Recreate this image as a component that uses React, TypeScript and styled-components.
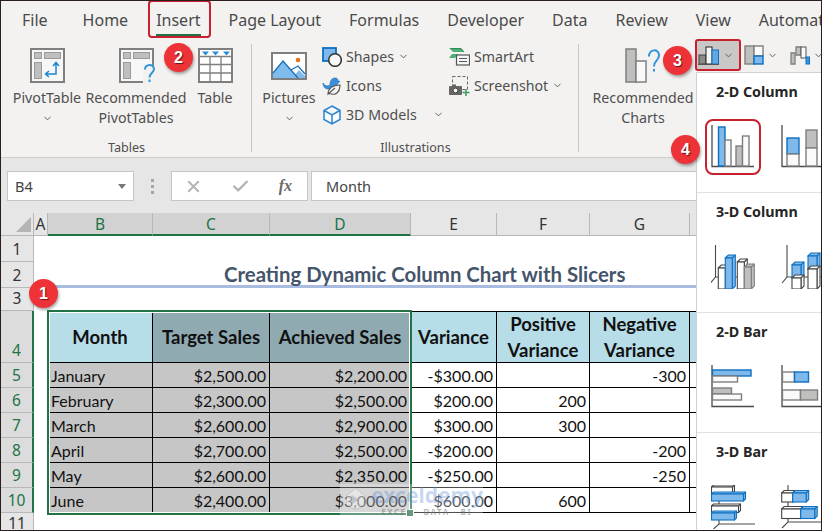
import React from "react";
import styled, { createGlobalStyle } from "styled-components";
import { ChevronDown, X, Check } from "lucide-react";

const UI = `"Noto Sans", "Open Sans", sans-serif`;
const CELL = `Lato, "Noto Sans", sans-serif`;
const RED = "#c8202f";
const GREEN = "#217346";

const Global = createGlobalStyle`
  html, body { margin: 0; padding: 0; overflow: hidden; background: #fff; }
  * { box-sizing: border-box; }
`;

const Frame = styled.div`
  position: relative;
  width: 822px;
  height: 531px;
  border: 1px solid #2a1f1c;
  background: #fff;
  overflow: hidden;
  display: flex;
  flex-direction: column;
  font-family: ${UI};
  color: #444;
`;

const TabBar = styled.nav`
  height: 36px;
  flex: none;
  display: flex;
  align-items: center;
  gap: 28px;
  padding: 2px 0 0 21px;
  background: #f3f2f1;
  font-size: 16px;
  color: #4a4a4a;
  white-space: nowrap;
`;

const Tab = styled.span<{ $active?: boolean }>`
  position: relative;
  &:first-child { margin-right: 7px; }
  ${(p) =>
    p.$active &&
    `
    &::before { content: ""; position: absolute; inset: -9px -10px -7px -8px; border: 2px solid ${RED}; border-radius: 4px; }
    &::after { content: ""; position: absolute; left: 0; right: 0; bottom: -5px; height: 2px; background: ${GREEN}; }
  `}
`;

const Ribbon = styled.section`
  height: 121px;
  flex: none;
  display: flex;
  background: #f3f2f1;
  border-bottom: 1px solid #cfcdcb;
`;

const Group = styled.div<{ $w: number; $pad?: number; $sep?: boolean }>`
  position: relative;
  width: ${(p) => p.$w}px;
  flex: none;
  display: flex;
  flex-direction: column;
  padding-left: ${(p) => p.$pad ?? 0}px;
  ${(p) =>
    p.$sep &&
    `&::after { content: ""; position: absolute; right: 0; top: 7px; bottom: 5px; width: 1px; background: #c8c6c4; }`}
`;

const GroupBody = styled.div`
  height: 100px;
  flex: none;
  display: flex;
`;

const GroupLabel = styled.div<{ $pad?: number }>`
  height: 20px;
  line-height: 22px;
  margin-left: ${(p) => -(p.$pad ?? 0)}px;
  text-align: center;
  font-size: 12.6px;
  color: #4f4f4f;
`;

const BigButton = styled.div<{ $w: number }>`
  width: ${(p) => p.$w}px;
  flex: none;
  display: flex;
  flex-direction: column;
  align-items: center;
  text-align: center;
  padding-top: 11px;
  font-size: 14.2px;
  line-height: 20px;
  color: #4f4f4f;
  white-space: nowrap;
  svg.icon { display: block; margin-bottom: 5px; }
`;

const ToolColumn = styled.div<{ $w: number; $inset?: number }>`
  width: ${(p) => p.$w}px;
  flex: none;
  display: flex;
  flex-direction: column;
  padding: 5px 0 0 ${(p) => p.$inset ?? 0}px;
`;

const ToolRow = styled.div`
  height: 29px;
  display: flex;
  align-items: center;
  gap: 4px;
  font-size: 14.2px;
  color: #4f4f4f;
  white-space: nowrap;
  svg.small { flex: none; }
`;

const ChartTools = styled.div`
  display: flex;
  height: 32px;
  margin-top: 2px;
  align-items: center;
`;

const ChartTool = styled.div<{ $on?: boolean; $w: number }>`
  width: ${(p) => p.$w}px;
  height: 32px;
  flex: none;
  display: flex;
  align-items: center;
  gap: 3px;
  padding-left: 3px;
  ${(p) => p.$on && `background: #c9c8c6; border: 2px solid ${RED}; border-radius: 3px; padding-left: 1px;`}
`;

const Chev = styled(ChevronDown)<{ $gap?: number }>`
  flex: none;
  color: #555;
  margin-left: ${(p) => p.$gap ?? 0}px;
`;

const BigChev = styled(ChevronDown)`
  flex: none;
  color: #555;
  margin-top: 5px;
`;

const FormulaBar = styled.section`
  height: 55px;
  flex: none;
  display: flex;
  background: #e6e6e6;
  padding: 13px 0 12px 6px;
  align-items: stretch;
  font-size: 14.5px;
  color: #444;
`;

const NameBox = styled.div`
  width: 127px;
  background: #fff;
  border: 1px solid #c6c6c6;
  padding-left: 7px;
  display: flex;
  align-items: center;
  justify-content: space-between;
  padding-right: 7px;
  &::after { content: ""; border: 4px solid transparent; border-top: 5px solid #777; margin-top: 4px; }
`;

const Grip = styled.div`
  width: 37px;
  flex: none;
  display: flex;
  flex-direction: column;
  align-items: center;
  justify-content: center;
  gap: 3px;
  i { width: 3px; height: 3px; background: #a6a6a6; }
`;

const FxButtons = styled.div`
  width: 137px;
  flex: none;
  background: #fff;
  border: 1px solid #c6c6c6;
  display: flex;
  align-items: center;
  justify-content: space-between;
  padding: 0 15px 0 12px;
  color: #b4b4b4;
`;

const Fx = styled.span`
  font: italic bold 16px "Liberation Serif", serif;
  color: #6a6a6a;
`;

const FormulaInput = styled.div`
  flex: 1;
  margin-left: 3px;
  background: #fff;
  border: 1px solid #c6c6c6;
  border-right: none;
  padding-left: 14px;
  display: flex;
  align-items: center;
`;

const COLS = "33px 14px 105px 117px 141px 86px 93px 100px 1fr";

const Sheet = styled.section`
  position: relative;
  flex: 1;
  min-height: 0;
  display: grid;
  grid-template-columns: ${COLS};
  grid-template-rows: 23px 26px 26px 23px 52px repeat(6, 25px) 1fr;
  font-family: ${CELL};
  font-size: 16px;
  color: #111;
  background: #fff;
`;

const Blank = styled.div`
  grid-column: 2 / -1;
`;

const Corner = styled.div`
  background: #e6e6e6;
  border-right: 1px solid #b8b8b8;
  border-bottom: 1px solid #b8b8b8;
  position: relative;
  &::after {
    content: "";
    position: absolute;
    right: 2px;
    bottom: 3px;
    width: 15px;
    height: 15px;
    background: #b4b4b4;
    clip-path: polygon(100% 0, 100% 100%, 0 100%);
  }
`;

const ColHead = styled.div<{ $sel?: boolean }>`
  display: flex;
  align-items: center;
  justify-content: center;
  font-family: ${UI};
  font-size: 15.5px;
  background: ${(p) => (p.$sel ? "#d2d2d2" : "#e6e6e6")};
  color: ${(p) => (p.$sel ? GREEN : "#333")};
  border-right: 1px solid #b8b8b8;
  border-bottom: ${(p) => (p.$sel ? `2px solid ${GREEN}` : "1px solid #b8b8b8")};
`;

const RowHead = styled.div<{ $sel?: boolean }>`
  display: flex;
  align-items: flex-end;
  justify-content: center;
  padding-bottom: 2px;
  font-family: ${UI};
  font-size: 15.5px;
  line-height: 20px;
  background: ${(p) => (p.$sel ? "#dcdcdc" : "#e6e6e6")};
  color: ${(p) => (p.$sel ? GREEN : "#333")};
  border-bottom: 1px solid #b8b8b8;
  border-right: ${(p) => (p.$sel ? `2px solid ${GREEN}` : "1px solid #b8b8b8")};
`;

const Cell = styled.div<{ $bg?: string; $right?: boolean }>`
  display: flex;
  align-items: center;
  justify-content: ${(p) => (p.$right ? "flex-end" : "flex-start")};
  padding: 0 3px;
  white-space: nowrap;
  background: ${(p) => p.$bg ?? "transparent"};
  border-right: 1px solid #000;
  border-bottom: 1px solid #000;
`;

const HeadCell = styled.div<{ $bg: string }>`
  display: flex;
  align-items: center;
  justify-content: center;
  text-align: center;
  font-weight: 700;
  font-size: 18.5px;
  line-height: 26px;
  white-space: nowrap;
  background: ${(p) => p.$bg};
  border-top: 1px solid #000;
  border-right: 1px solid #000;
  border-bottom: 1px solid #000;
`;

const Title = styled.div`
  grid-column: 3 / -1;
  display: flex;
  align-items: center;
  padding-left: 176px;
  font-size: 20.4px;
  font-weight: 700;
  color: #44546a;
  white-space: nowrap;
  border-bottom: 3px solid #a9bce0;
`;

const Selection = styled.div`
  position: absolute;
  left: 46px;
  top: 97px;
  width: 365px;
  height: 205px;
  border: 2px solid ${GREEN};
  box-shadow: inset 0 0 0 1px #fff;
  pointer-events: none;
  &::after {
    content: "";
    position: absolute;
    right: -4px;
    bottom: -4px;
    width: 6px;
    height: 6px;
    background: ${GREEN};
    border: 1px solid #fff;
  }
`;

const Watermark = styled.div`
  position: absolute;
  left: 339px;
  top: 271px;
  width: 143px;
  height: 33px;
  background: rgba(255, 255, 255, 0.3);
  display: flex;
  align-items: flex-start;
  gap: 5px;
  padding-left: 5px;
  font-family: ${UI};
  pointer-events: none;
`;

const WatermarkText = styled.div`
  display: flex;
  flex-direction: column;
`;

const WatermarkName = styled.div`
  font-size: 21px;
  font-weight: 700;
  line-height: 23px;
  color: rgba(90, 140, 215, 0.36);
`;

const WatermarkTag = styled.div`
  font-size: 8px;
  font-weight: 700;
  line-height: 9px;
  letter-spacing: 1.5px;
  padding-left: 10px;
  color: rgba(110, 110, 110, 0.5);
`;

const Panel = styled.aside`
  position: absolute;
  left: 695px;
  top: 71px;
  right: 0;
  bottom: 0;
  background: #fff;
  border-left: 1px solid #d0d0d0;
  border-top: 1px solid #d0d0d0;
  overflow: hidden;
`;

const PanelSection = styled.div`
  height: 120px;
  border-bottom: 1px solid #e1e1e1;
  padding: 9px 0 0 14px;
  &:last-child { border-bottom: none; }
`;

const PanelHeading = styled.div`
  font-size: 14.3px;
  font-weight: 700;
  line-height: 20px;
  padding-left: 5px;
  margin-bottom: 23px;
  color: #262626;
  white-space: nowrap;
`;

const PanelIcons = styled.div`
  display: flex;
  gap: 26px;
  width: 140px;
`;

const ChartChoice = styled.div<{ $marked?: boolean }>`
  width: 44px;
  height: 44px;
  flex: none;
  ${(p) => p.$marked && `outline: 2px solid ${RED}; outline-offset: 4px; border-radius: 2px;`}
`;

const Badge = styled.div<{ $x: number; $y: number }>`
  position: absolute;
  left: ${(p) => p.$x - 14}px;
  top: ${(p) => p.$y - 14}px;
  width: 29px;
  height: 29px;
  border-radius: 50%;
  background: #ee3338;
  color: #fff;
  font: 700 16px "Liberation Sans", sans-serif;
  text-shadow: 1px 1px 1px rgba(0, 0, 0, 0.6);
  display: flex;
  align-items: center;
  justify-content: center;
  box-shadow: 1px 2px 3px rgba(0, 0, 0, 0.35);
`;

const G = "#7f7f7f";
const GF = "#bfbfbd";
const BL = "#0e70c0";
const BF = "#7fb8ea";
const AX = "#4a4a4a";

const PivotBase = () => (
  <>
    <rect x="1" y="1" width="33" height="33" fill="#f7f7f7" stroke={G} strokeWidth="2" />
    <rect x="4.5" y="4.5" width="7" height="6" fill={GF} stroke="#9a9a9a" />
    <rect x="14.5" y="4.5" width="16" height="6" fill={GF} stroke="#9a9a9a" />
    <rect x="4.5" y="14.5" width="7" height="16" fill={GF} stroke="#9a9a9a" />
  </>
);

const PivotIcon = () => (
  <svg className="icon" width="35" height="35" viewBox="0 0 35 35">
    <PivotBase />
    <path d="M26 15v11H16M23 18l3-3.5 3 3.5M19 23l-3.5 3 3.5 3" fill="none" stroke="#1b86d2" strokeWidth="1.5" />
  </svg>
);

const RecPivotIcon = () => (
  <svg className="icon" width="40" height="35" viewBox="0 0 40 35" style={{ marginLeft: 5 }}>
    <PivotBase />
    <rect x="24" y="18" width="14" height="17" fill="#f3f2f1" />
    <path d="M26 21.5c0-6 9-6 9-.5 0 4-4.5 4-4.5 8.5" fill="none" stroke="#2f95da" strokeWidth="2" />
    <rect x="29.5" y="31.5" width="2" height="2.5" fill="#2f95da" />
  </svg>
);

const TableIcon = () => (
  <svg className="icon" width="35" height="35" viewBox="0 0 35 35">
    <rect x="1" y="1" width="33" height="33" fill="#fff" stroke={G} strokeWidth="2" />
    <path d="M1 8.5h33M1 16.5h33M1 25h33M12 8.5v25M23 8.5v25" stroke={G} strokeWidth="1.3" />
    <path d="M4 3.5h7l-3.5 4zM14 3.5h7l-3.5 4zM25 3.5h7l-3.5 4z" fill="#2a8ad4" />
  </svg>
);

const PicturesIcon = () => (
  <svg className="icon" width="36" height="35" viewBox="0 0 36 35">
    <rect x="1" y="5" width="34" height="26" fill="#fff" stroke={G} strokeWidth="2" />
    <path d="M2 25 L12 13 L24 27 L28 22 L34 28 V30 H2z" fill="#7fbbec" />
    <path d="M2 25 L12 13 L27 30M20 22l7-4 7 8" fill="none" stroke="#1a70b8" strokeWidth="1.3" />
    <circle cx="27" cy="12" r="2.3" fill="#e3751e" />
  </svg>
);

const ShapesIcon = () => (
  <svg className="small" width="20" height="20" viewBox="0 0 20 20">
    <rect x="1" y="1" width="13" height="13" fill="#7fb8ea" stroke={BL} strokeWidth="1.8" />
    <circle cx="13" cy="13" r="6.3" fill="#f7f7f7" stroke="#333" strokeWidth="1.5" />
  </svg>
);

const BirdLeafIcon = () => (
  <svg className="small" width="20" height="20" viewBox="0 0 20 20">
    <path d="M1 7c2 4 6 3 7 2 0-3 1-7 5-7 3 0 3 2 3 3l2 .5-2 1.2C15 11 10 13 6 13 3 13 1 10 1 7z" fill="#3b8fd8" stroke="#1a70b8" strokeWidth=".7" />
    <path d="M6 18c0-5 4-9 12-9 0 7-4 10-8 9-2 0-3-1-4 0zM6 18l7-6" fill="#f3f2f1" stroke="#555" strokeWidth="1.1" />
  </svg>
);

const CubeIcon = () => (
  <svg className="small" width="20" height="20" viewBox="0 0 20 20">
    <path d="M10 1l8 4.5v9L10 19l-8-4.5v-9zM2 5.5L10 10l8-4.5M10 10v9" fill="#f7fbfe" stroke="#2a84cf" strokeWidth="1.5" />
  </svg>
);

const SmartArtIcon = () => (
  <svg className="small" width="21" height="21" viewBox="0 0 21 21">
    <path d="M0 2h12l3 4H4zM0 12h6l3-4H3z" fill="#4fae74" />
    <path d="M2 2.5h10l3 3.5" fill="none" stroke="#2f8a53" />
    <rect x="7.5" y="9" width="13" height="10" fill="#f7f7f7" stroke="#555" strokeWidth="1.2" />
    <path d="M10 12.5h8M10 15.5h8" stroke="#555" />
  </svg>
);

const ScreenshotIcon = () => (
  <svg className="small" width="21" height="21" viewBox="0 0 21 21">
    <rect x="3.5" y="1.5" width="15" height="13" fill="none" stroke="#666" strokeDasharray="3 2" />
    <rect x="0" y="11" width="13" height="9" rx="1" fill="#666" />
    <rect x="3" y="9.5" width="4" height="2" fill="#666" />
    <circle cx="6.5" cy="15.5" r="2.4" fill="#f3f2f1" stroke="#444" />
    <path d="M17 14v7M13.5 17.5h7" stroke="#3c9b5c" strokeWidth="1.5" />
  </svg>
);

const RecChartsIcon = () => (
  <svg className="icon" width="48" height="35" viewBox="0 0 48 35" style={{ marginLeft: 12 }}>
    <rect x="1" y="1" width="10" height="33" fill={GF} stroke={G} strokeWidth="1.5" />
    <rect x="11" y="13" width="10" height="21" fill="#f9f9f9" stroke={G} strokeWidth="1.5" />
    <path d="M24 8.5c0-8 10-8 10-1 0 5-5 5-5 11" fill="none" stroke="#2f95da" strokeWidth="2" />
    <rect x="28" y="21" width="2" height="2.5" fill="#2f95da" />
  </svg>
);

const ColumnTool = () => (
  <svg width="22" height="20" viewBox="0 0 22 20">
    <rect x="1" y="10" width="7" height="9" fill="#8a8a88" stroke="#444" />
    <rect x="8" y="2" width="6" height="17" fill="#f7f7f7" stroke="#222" />
    <rect x="14" y="5" width="6.5" height="14" fill="#63a8e0" stroke={BL} />
    <path d="M0 19.5h21" stroke="#555" />
  </svg>
);

const TreeTool = () => (
  <svg width="20" height="20" viewBox="0 0 20 20">
    <rect x="1" y="1" width="9" height="18" fill={GF} stroke={G} strokeWidth="1.4" />
    <rect x="10" y="1" width="9" height="10" fill="#fafafa" stroke={G} strokeWidth="1.4" />
    <rect x="10" y="11" width="9" height="8" fill="#7fb8ea" stroke={BL} strokeWidth="1.4" />
  </svg>
);

const StepTool = () => (
  <svg width="20" height="20" viewBox="0 0 20 20">
    <path d="M1 19V8h5V2h5v8H5v9z" fill={GF} stroke={G} strokeWidth="1.3" />
    <rect x="11" y="2" width="5" height="11" fill="#fafafa" stroke="#555" />
    <rect x="16" y="12" width="3.5" height="7" fill="#3f93d6" stroke={BL} />
  </svg>
);

const LogoMark = () => (
  <svg width="26" height="28" viewBox="0 0 26 28">
    <path d="M2 11L13 2l11 9v12l-11 5-11-5z" fill="rgba(255,255,255,0.35)" stroke="rgba(140,140,150,0.35)" />
    <path d="M8 10l9 6-9 6z" fill="rgba(120,120,130,0.3)" />
  </svg>
);

const Box = ({ x, y, w, h, kind }: { x: number; y: number; w: number; h: number; kind: "b" | "g" | "w" }) => (
  <rect
    x={x}
    y={y}
    width={w}
    height={h}
    fill={kind === "b" ? BF : kind === "g" ? GF : "#fafafa"}
    stroke={kind === "b" ? BL : G}
    strokeWidth="1.4"
  />
);

const Box3D = ({ x, y, w, h, kind, d = 3 }: { x: number; y: number; w: number; h: number; kind: "b" | "g" | "w"; d?: number }) => {
  const stroke = kind === "b" ? BL : kind === "g" ? G : "#444";
  const fill = kind === "b" ? BF : kind === "g" ? GF : "#fff";
  return (
    <g stroke={stroke} strokeWidth="1.1" fill={fill}>
      <path d={`M${x} ${y}l${d} ${-d}h${w}v${h}l${-d} ${d}z`} />
      <path d={`M${x + w} ${y}l${d} ${-d}M${x} ${y}h${w}v${h}`} fill="none" />
      <rect x={x} y={y} width={w} height={h} />
    </g>
  );
};

const Chart = ({ children }: { children: React.ReactNode }) => (
  <svg width="44" height="44" viewBox="0 0 44 44" style={{ display: "block" }}>
    {children}
  </svg>
);

const Axes = ({ y = 41.5 }: { y?: number }) => (
  <path d={`M1 0V${y}H43`} fill="none" stroke={AX} strokeWidth="1.3" />
);

const Axes3D = ({ x, y }: { x: number; y: number }) => (
  <path d={`M${x} 0V${y}L${x - 5} ${y + 6}M${x} ${y}H43`} fill="none" stroke={AX} strokeWidth="1.1" />
);

const ClusterCol = () => (
  <Chart>
    <Axes />
    <Box x={7.5} y={2} w={6.5} h={39} kind="b" />
    <Box x={14} y={15} w={6} h={26} kind="w" />
    <Box x={25} y={21} w={6.5} h={20} kind="g" />
    <Box x={31.5} y={11} w={6.5} h={30} kind="w" />
  </Chart>
);

const StackCol = () => (
  <Chart>
    <Axes />
    <Box x={6} y={13} w={12} h={16} kind="b" />
    <Box x={6} y={29} w={12} h={12} kind="w" />
    <Box x={25} y={5} w={11} h={18} kind="g" />
    <Box x={25} y={23} w={11} h={18} kind="w" />
  </Chart>
);

const ClusterCol3D = () => (
  <Chart>
    <Axes3D x={4.5} y={32} />
    <Box3D x={7.3} y={23} w={7} h={21} kind="w" />
    <Box3D x={14.3} y={13} w={7} h={31} kind="b" />
    <Box3D x={26.3} y={17} w={7} h={27} kind="w" />
    <Box3D x={33.3} y={22} w={7} h={22} kind="g" />
  </Chart>
);

const StackCol3D = () => (
  <Chart>
    <Axes3D x={6} y={32} />
    <Box3D x={11} y={20} w={9} h={13} kind="b" />
    <Box3D x={11} y={33} w={9} h={11} kind="w" />
    <Box3D x={27} y={11} w={9} h={13} kind="b" />
    <Box3D x={27} y={24} w={9} h={20} kind="w" />
  </Chart>
);

const ClusterBar = () => (
  <Chart>
    <Axes />
    <Box x={1.5} y={5} w={38.5} h={6} kind="b" />
    <Box x={1.5} y={11} w={25} h={6} kind="w" />
    <Box x={1.5} y={23} w={19} h={6} kind="g" />
    <Box x={1.5} y={29} w={29} h={6} kind="w" />
  </Chart>
);

const StackBar = () => (
  <Chart>
    <Axes />
    <Box x={1.5} y={7} w={12} h={10} kind="w" />
    <Box x={13.5} y={7} w={14} h={10} kind="b" />
    <Box x={1.5} y={25} w={18} h={10} kind="w" />
    <Box x={19.5} y={25} w={17} h={10} kind="g" />
  </Chart>
);

const ClusterBar3D = () => (
  <Chart>
    <path d="M8 0V39M2.5 44L8 39H44" fill="none" stroke={AX} strokeWidth="1.1" />
    <Box3D x={0.5} y={2} w={21} h={6.5} kind="w" d={2} />
    <Box3D x={0.5} y={9} w={32} h={7} kind="b" d={2} />
    <Box3D x={0.5} y={21} w={27} h={6.5} kind="w" d={2} />
    <Box3D x={0.5} y={28} w={23} h={7} kind="b" d={2} />
  </Chart>
);

const StackBar3D = () => (
  <Chart>
    <path d="M7 0V37M1 43L7 37H44" fill="none" stroke={AX} strokeWidth="1.1" />
    <Box3D x={0.7} y={8} w={11} h={9} kind="w" d={2.5} />
    <Box3D x={11.7} y={8} w={13.5} h={9} kind="b" d={2.5} />
    <Box3D x={0.7} y={24} w={19} h={9.5} kind="w" d={2.5} />
    <Box3D x={19.7} y={24} w={14} h={9.5} kind="b" d={2.5} />
  </Chart>
);

const TABS = ["File", "Home", "Insert", "Page Layout", "Formulas", "Developer", "Data", "Review", "View", "Automate"];
const COLUMN_LETTERS = ["A", "B", "C", "D", "E", "F", "G", ""];
const SELECTED_COLS = ["B", "C", "D"];
const LB = "#b7dde8";
const DB = "#8faab1";
const SG = "#c6c6c6";

const RECORDS = [
  ["January", "$2,500.00", "$2,200.00", "-$300.00", "", "-300"],
  ["February", "$2,300.00", "$2,500.00", "$200.00", "200", ""],
  ["March", "$2,600.00", "$2,900.00", "$300.00", "300", ""],
  ["April", "$2,700.00", "$2,500.00", "-$200.00", "", "-200"],
  ["May", "$2,600.00", "$2,350.00", "-$250.00", "", "-250"],
  ["June", "$2,400.00", "$3,000.00", "$600.00", "600", ""],
];

const SECTIONS: { title: string; icons: React.ReactNode[]; marked?: boolean }[] = [
  { title: "2-D Column", icons: [<ClusterCol key="a" />, <StackCol key="b" />], marked: true },
  { title: "3-D Column", icons: [<ClusterCol3D key="a" />, <StackCol3D key="b" />] },
  { title: "2-D Bar", icons: [<ClusterBar key="a" />, <StackBar key="b" />] },
  { title: "3-D Bar", icons: [<ClusterBar3D key="a" />, <StackBar3D key="b" />] },
];

export default function App() {
  return (
    <Frame>
      <Global />
      <TabBar>
        {TABS.map((t) => (
          <Tab key={t} $active={t === "Insert"}>
            {t}
          </Tab>
        ))}
      </TabBar>

      <Ribbon>
        <Group $w={251} $pad={10} $sep>
          <GroupBody>
            <BigButton $w={72}>
              <PivotIcon />
              PivotTable
              <BigChev size={11} strokeWidth={2} />
            </BigButton>
            <BigButton $w={106}>
              <RecPivotIcon />
              <span>
                Recommended
                <br />
                PivotTables
              </span>
            </BigButton>
            <BigButton $w={52}>
              <TableIcon />
              Table
            </BigButton>
          </GroupBody>
          <GroupLabel $pad={10}>Tables</GroupLabel>
        </Group>

        <Group $w={327} $pad={7} $sep>
          <GroupBody>
            <BigButton $w={60}>
              <PicturesIcon />
              Pictures
              <BigChev size={11} strokeWidth={2} />
            </BigButton>
            <ToolColumn $w={130} $inset={3}>
              <ToolRow>
                <ShapesIcon />
                Shapes
                <Chev size={11} strokeWidth={2} />
              </ToolRow>
              <ToolRow>
                <BirdLeafIcon />
                Icons
              </ToolRow>
              <ToolRow>
                <CubeIcon />
                3D Models
                <Chev size={11} strokeWidth={2} $gap={12} />
              </ToolRow>
            </ToolColumn>
            <ToolColumn $w={125}>
              <ToolRow>
                <SmartArtIcon />
                SmartArt
              </ToolRow>
              <ToolRow>
                <ScreenshotIcon />
                Screenshot
                <Chev size={11} strokeWidth={2} />
              </ToolRow>
            </ToolColumn>
          </GroupBody>
          <GroupLabel $pad={7}>Illustrations</GroupLabel>
        </Group>

        <Group $w={242} $pad={12}>
          <GroupBody>
            <BigButton $w={104}>
              <RecChartsIcon />
              <span>
                Recommended
                <br />
                Charts
              </span>
            </BigButton>
            <ChartTools>
              <ChartTool $on $w={46}>
                <ColumnTool />
                <Chev size={11} strokeWidth={2} />
              </ChartTool>
              <ChartTool $w={46}>
                <TreeTool />
                <Chev size={11} strokeWidth={2} />
              </ChartTool>
              <ChartTool $w={40}>
                <StepTool />
                <Chev size={11} strokeWidth={2} />
              </ChartTool>
            </ChartTools>
          </GroupBody>
        </Group>
      </Ribbon>

      <FormulaBar>
        <NameBox>B4</NameBox>
        <Grip>
          <i />
          <i />
          <i />
        </Grip>
        <FxButtons>
          <X size={19} strokeWidth={2.4} />
          <Check size={19} strokeWidth={3} />
          <Fx>fx</Fx>
        </FxButtons>
        <FormulaInput>Month</FormulaInput>
      </FormulaBar>

      <Sheet>
        <Corner />
        {COLUMN_LETTERS.map((c, i) => (
          <ColHead key={i} $sel={SELECTED_COLS.includes(c)}>
            {c}
          </ColHead>
        ))}

        <RowHead>1</RowHead>
        <Blank />

        <RowHead>2</RowHead>
        <div />
        <Title>Creating Dynamic Column Chart with Slicers</Title>

        <RowHead>3</RowHead>
        <Blank />

        <RowHead $sel>4</RowHead>
        <div />
        <HeadCell $bg={LB}>Month</HeadCell>
        <HeadCell $bg={DB}>Target Sales</HeadCell>
        <HeadCell $bg={DB}>Achieved Sales</HeadCell>
        <HeadCell $bg={LB}>Variance</HeadCell>
        <HeadCell $bg={LB}>
          Positive
          <br />
          Variance
        </HeadCell>
        <HeadCell $bg={LB}>
          Negative
          <br />
          Variance
        </HeadCell>
        <HeadCell $bg={LB} />

        {RECORDS.map((r, i) => (
          <React.Fragment key={r[0]}>
            <RowHead $sel>{i + 5}</RowHead>
            <div />
            <Cell $bg={SG}>{r[0]}</Cell>
            <Cell $bg={SG} $right>
              {r[1]}
            </Cell>
            <Cell $bg={SG} $right>
              {r[2]}
            </Cell>
            <Cell $right>{r[3]}</Cell>
            <Cell $right>{r[4]}</Cell>
            <Cell $right>{r[5]}</Cell>
            <Cell />
          </React.Fragment>
        ))}

        <RowHead>11</RowHead>
        <Blank />

        <Selection />
        <Watermark>
          <LogoMark />
          <WatermarkText>
            <WatermarkName>exceldemy</WatermarkName>
            <WatermarkTag>EXCEL · DATA · BI</WatermarkTag>
          </WatermarkText>
        </Watermark>
      </Sheet>

      <Panel>
        {SECTIONS.map((s) => (
          <PanelSection key={s.title}>
            <PanelHeading>{s.title}</PanelHeading>
            <PanelIcons>
              {s.icons.map((icon, i) => (
                <ChartChoice key={i} $marked={s.marked && i === 0}>
                  {icon}
                </ChartChoice>
              ))}
            </PanelIcons>
          </PanelSection>
        ))}
      </Panel>

      <Badge $x={42} $y={292}>1</Badge>
      <Badge $x={177} $y={56}>2</Badge>
      <Badge $x={676} $y={59}>3</Badge>
      <Badge $x={684} $y={148}>4</Badge>
    </Frame>
  );
}
